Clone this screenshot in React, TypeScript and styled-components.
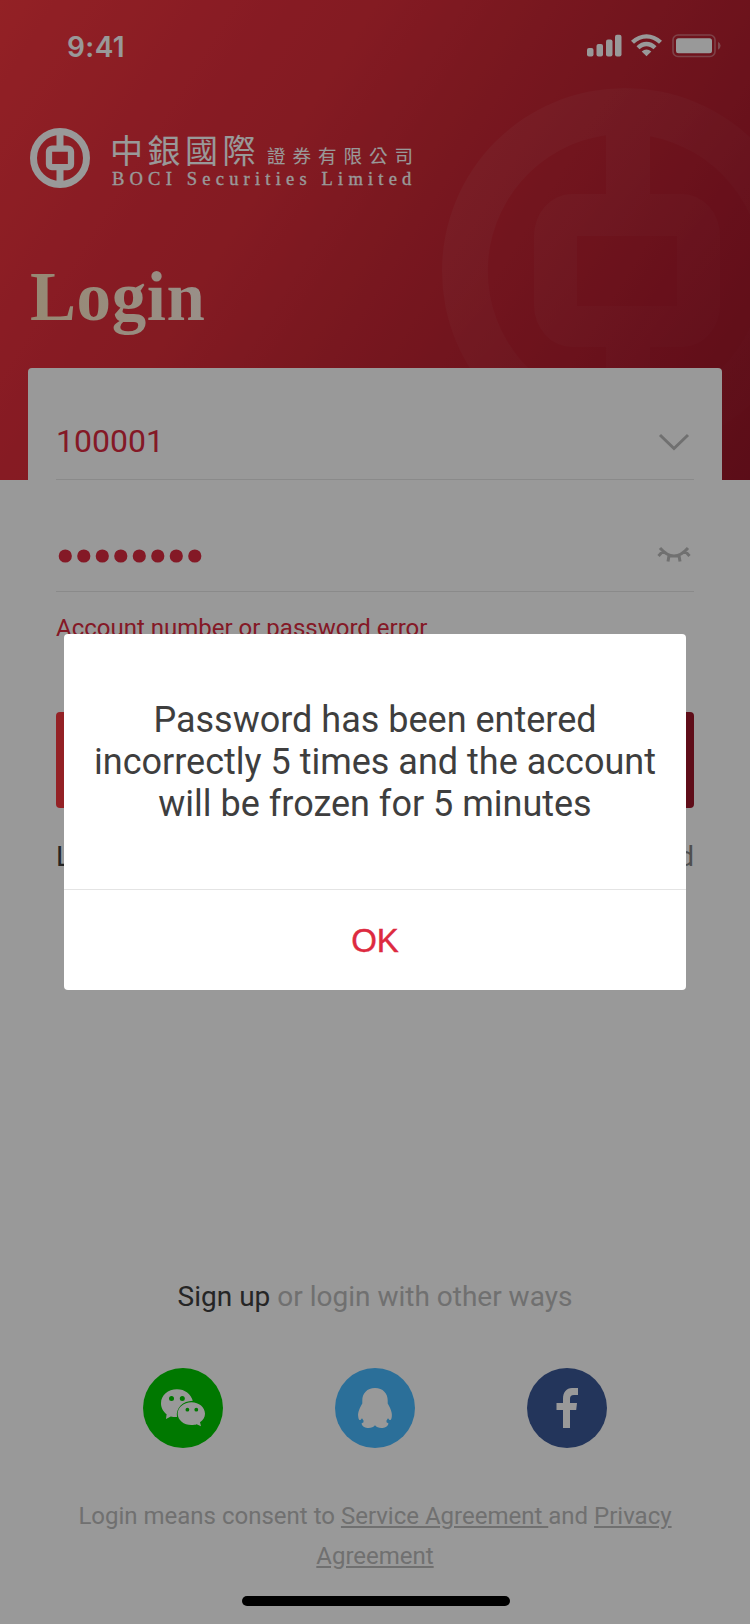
import React from "react";
import styled, { createGlobalStyle } from "styled-components";

const Global = createGlobalStyle`
  * { box-sizing: border-box; }
  body { margin: 0; background: #fff; font-family: Roboto, "Liberation Sans", sans-serif; }
  button { font: inherit; border: 0; background: none; padding: 0; }
`;

const Screen = styled.div`
  position: relative;
  width: 750px;
  height: 1624px;
  overflow: hidden;
  background: #fff;
  display: flex;
  flex-direction: column;
`;

const Hero = styled.header`
  position: relative;
  height: 480px;
  flex: none;
  overflow: hidden;
  background: linear-gradient(
    122deg,
    #f5373f 0%,
    #e02d3b 28%,
    #dc2d3a 36%,
    #cb2835 50%,
    #b62030 72%,
    #ac1b2d 82%,
    #981728 100%
  );
`;

const Watermark = styled.svg`
  position: absolute;
  left: 442px;
  top: 88px;
`;

const StatusBar = styled.div`
  height: 88px;
  padding: 4px 29px 0 67px;
  display: flex;
  align-items: center;
  justify-content: space-between;
`;

const Clock = styled.span`
  font: 600 28px/34px Inter, sans-serif;
  letter-spacing: 0.4px;
  padding-top: 2px;
  color: #fff;
`;

const StatusIcons = styled.svg`
  display: block;
`;

const Brand = styled.div`
  height: 60px;
  margin: 40px 30px 0;
  display: flex;
  gap: 20px;
`;

const BrandText = styled.div`
  color: #fff;
`;

const ChineseName = styled.div`
  height: 42px;
  display: flex;
  align-items: baseline;
  font-family: "Noto Sans CJK TC", sans-serif;
  line-height: 43px;
  white-space: nowrap;
`;

const NameLarge = styled.span`
  font-size: 33px;
  font-weight: 400;
  letter-spacing: 4.5px;
`;

const NameSmall = styled.span`
  font-size: 18.5px;
  font-weight: 400;
  letter-spacing: 7px;
  margin-left: 7px;
`;

const EnglishName = styled.div`
  font: 18.5px/18px "Liberation Serif", serif;
  letter-spacing: 5.2px;
  padding-left: 2px;
  white-space: nowrap;
  -webkit-text-stroke: 0.3px #fff;
`;

const Title = styled.h1`
  margin: 64px 0 0 30px;
  width: max-content;
  font: 700 69px/90px "Liberation Serif", serif;
  letter-spacing: 0.6px;
  background: linear-gradient(90deg, #fbe4c0, #fff0e4);
  background-clip: text;
  -webkit-background-clip: text;
  color: transparent;
`;

const Card = styled.section`
  position: relative;
  margin: -112px 28px 0;
  padding: 0 28px;
  background: #fff;
  border-radius: 4px;
  display: flex;
  flex-direction: column;
`;

const Field = styled.div<{ $top?: number }>`
  height: 112px;
  border-bottom: 1px solid #e6e6e6;
  padding-top: ${(p) => p.$top ?? 35}px;
  display: flex;
  align-items: center;
  justify-content: space-between;
`;

const Account = styled.span`
  font-size: 32px;
  color: #dd2a40;
`;

const Dots = styled.svg`
  display: block;
  margin-top: 3px;
`;

const ErrorText = styled.p`
  margin: 22px 0 0;
  font-size: 24px;
  line-height: 28px;
  color: #dd2a40;
`;

const LoginButton = styled.button`
  margin-top: 70px;
  height: 96px;
  border-radius: 4px;
  background: linear-gradient(90deg, #f7383f, #9e172a);
`;

const Links = styled.div`
  margin-top: 33px;
  display: flex;
  justify-content: space-between;
  font-size: 28px;
  line-height: 32px;
  color: #3e3e3e;
`;

const Muted = styled.span`
  color: #848484;
`;

const SignUp = styled.p`
  margin: 406px 0 0;
  text-align: center;
  font-size: 28px;
  line-height: 36px;
  color: #bbb;
`;

const Strong = styled.span`
  color: #3e3e3e;
`;

const Socials = styled.div`
  margin: 53px 143px 0;
  display: flex;
  justify-content: space-between;
`;

const SocialIcon = styled.svg`
  display: block;
  width: 80px;
  height: 80px;
`;

const Consent = styled.p`
  margin: 48px 60px 0;
  text-align: center;
  font-size: 24px;
  line-height: 40px;
  color: #bbb;
`;

const Link = styled.span`
  text-decoration: underline;
`;

const Overlay = styled.div`
  position: absolute;
  inset: 0;
  background: rgba(0, 0, 0, 0.4);
`;

const Dialog = styled.div`
  position: absolute;
  left: 64px;
  top: 634px;
  width: 622px;
  height: 356px;
  background: #fff;
  border-radius: 4px;
  display: flex;
  flex-direction: column;
`;

const Message = styled.p`
  margin: 0;
  height: 256px;
  padding: 65px 20px 0;
  border-bottom: 1px solid #e4e4e4;
  text-align: center;
  font-size: 36px;
  line-height: 42px;
  color: #3e3e3e;
`;

const Confirm = styled.button`
  flex: 1;
  padding-top: 2px;
  font: 33px/40px "Liberation Sans", sans-serif;
  color: #dd2a40;
  -webkit-text-stroke: 0.4px #dd2a40;
`;

const HomeIndicator = styled.div`
  position: absolute;
  left: 242px;
  top: 1596px;
  width: 268px;
  height: 10px;
  border-radius: 5px;
  background: #000;
`;

const Logo = () => (
  <svg width="60" height="60" viewBox="0 0 60 60">
    <circle cx="30" cy="30" r="26.5" fill="none" stroke="#fff" strokeWidth="7" />
    <path d="M26.500 6h7v13h-7zM26.500 41h7v13h-7z" fill="#fff" />
    <rect x="19" y="20.700" width="22" height="18.500" rx="3" fill="none" stroke="#fff" strokeWidth="6.300" />
  </svg>
);

const App = () => (
  <Screen>
    <Global />
    <Hero>
      <Watermark width="308" height="392" viewBox="0 0 308 392">
        <defs>
          <linearGradient id="fade" gradientUnits="userSpaceOnUse" x1="30" y1="60" x2="290" y2="290">
            <stop offset="0" stopColor="#fff" stopOpacity="0.055" />
            <stop offset="0.5" stopColor="#fff" stopOpacity="0.03" />
            <stop offset="1" stopColor="#fff" stopOpacity="0.008" />
          </linearGradient>
        </defs>
        <path
          fill="url(#fade)"
          fillRule="evenodd"
          d="M183 0a183 183 0 0 1 0 366a183 183 0 0 1 0-366zM164 47.300A137 137 0 0 0 164 318.700V259H130a38 42 0 0 1-38-42V148a38 42 0 0 1 38-42H164zM208 48.300V106H240a38 42 0 0 1 38 42V217a38 42 0 0 1-38 42H208V317.700A137 137 0 0 0 208 48.300zM135 148V218H235V148z"
        />
      </Watermark>
      <StatusBar>
        <Clock>9:41</Clock>
        <StatusIcons width="134" height="24" viewBox="0 0 134 24" fill="#fff">
          <rect x="0" y="14" width="6.500" height="8.500" rx="2" />
          <rect x="9.500" y="10" width="6.500" height="12.500" rx="2" />
          <rect x="19" y="5.500" width="6.500" height="17" rx="2" />
          <rect x="28" y="0.800" width="6.500" height="21.700" rx="2" />
          <path d="M44 6.700C53-2 66-2 75 6.700L72 9.700C64.500 2.800 54.500 2.800 47 9.700z" />
          <path d="M49.500 12.200C55.500 6.400 63.500 6.400 69.500 12.200L66.500 15.200C62 11.200 57 11.200 52.500 15.200z" />
          <path d="M54.700 17.500C57.700 14.800 61.300 14.800 64.300 17.500L59.500 22.300z" />
          <rect x="86" y="1" width="42" height="21.500" rx="5" fill="none" stroke="#fff" strokeWidth="1.600" opacity="0.35" />
          <rect x="89" y="4.200" width="36" height="15" rx="2.500" />
          <path d="M131 7.700Q133.600 9 133.600 11.700T131 15.700z" opacity="0.4" />
        </StatusIcons>
      </StatusBar>
      <Brand>
        <Logo />
        <BrandText>
          <ChineseName>
            <NameLarge>中銀國際</NameLarge>
            <NameSmall>證券有限公司</NameSmall>
          </ChineseName>
          <EnglishName>BOCI Securities Limited</EnglishName>
        </BrandText>
      </Brand>
      <Title>Login</Title>
    </Hero>
    <Card>
      <Field>
        <Account>100001</Account>
        <svg width="40" height="26" viewBox="0 0 40 26" fill="none" stroke="#bbb" strokeWidth="3">
          <path d="M6 7L20 20.500L34 7" />
        </svg>
      </Field>
      <Field $top={38}>
        <Dots width="150" height="14" viewBox="0 0 150 14" fill="#dd2a40">
          {Array.from({ length: 8 }, (_, i) => (
            <circle key={i} cx={9.3 + i * 18.5} cy="7" r="6.6" />
          ))}
        </Dots>
        <svg width="40" height="24" viewBox="0 0 40 24" fill="none" stroke="#bbb" strokeWidth="3">
          <path d="M6 5Q20 21 34 5M9 8L4.500 13M15 12.500L14 18.500M25 12.500L26 18.500M31 8L35.500 13" />
        </svg>
      </Field>
      <ErrorText>Account number or password error</ErrorText>
      <LoginButton aria-label="Login" />
      <Links>
        <span>Login with SMS</span>
        <Muted>Forgot password</Muted>
      </Links>
    </Card>
    <SignUp>
      <Strong>Sign up</Strong> or login with other ways
    </SignUp>
    <Socials>
      <SocialIcon viewBox="0 0 80 80">
        <circle cx="40" cy="40" r="40" fill="#00c800" />
        <path d="M34 21.200c-9 0-16 6-16 14 0 4.400 2.200 8.500 5.600 11L23 51l4.800-2.600c2.100.6 4 .8 6.200.7C32.500 40 40 33 49.800 32.800C48 26 42 21.200 34 21.200z" fill="#fff" />
        <path d="M48.500 34.200c-7.800 0-13.800 5.200-13.800 11.500s6 11.300 13.800 11.300c2 0 3.500-.2 5.200-.8L58 58.300l-1-4c3.200-2.300 5-5.200 5-8.600 0-6.500-6-11.500-13.500-11.500z" fill="#fff" />
        <g fill="#00c800">
          <circle cx="28.500" cy="30.500" r="2.500" />
          <circle cx="39.300" cy="30.500" r="2.500" />
          <circle cx="44.400" cy="41.700" r="1.900" />
          <circle cx="53.300" cy="41.700" r="1.900" />
        </g>
      </SocialIcon>
      <SocialIcon viewBox="0 0 80 80">
        <circle cx="40" cy="40" r="40" fill="#48baff" />
        <path d="M40 20C32 20 27.300 25.500 27.300 32.500V35.500C25.500 38.500 22.500 44 23.200 48.500C23.500 51.500 24.500 52.500 25.500 52L27 50.300L28.500 52.500V54.300L26.500 55.500C27.500 59 30.500 60 33.500 60C36.500 60 38.500 59 40 57.300C41.500 59 43.500 60 46.500 60C49.500 60 52.500 59 53.500 55.500L51.500 54.300V52.500L53 50.300L54.500 52C55.500 52.500 56.500 51.500 56.800 48.500C57.500 44 54.500 38.500 52.700 35.500V32.500C52.700 25.500 48 20 40 20z" fill="#fff" />
      </SocialIcon>
      <SocialIcon viewBox="0 0 80 80">
        <circle cx="40" cy="40" r="40" fill="#3b5998" />
        <path d="M36 60V42H29.500V35H36V31c0-7 3.500-11 9-11h6v7h-4c-3 0-4 1.500-4 4v4h7l-.8 7H43V60z" fill="#fff" />
      </SocialIcon>
    </Socials>
    <Consent>
      Login means consent to <Link>Service Agreement </Link>and <Link>Privacy Agreement</Link>
    </Consent>
    <Overlay />
    <Dialog>
      <Message>Password has been entered incorrectly 5 times and the account will be frozen for 5 minutes</Message>
      <Confirm>OK</Confirm>
    </Dialog>
    <HomeIndicator />
  </Screen>
);

export default App;
